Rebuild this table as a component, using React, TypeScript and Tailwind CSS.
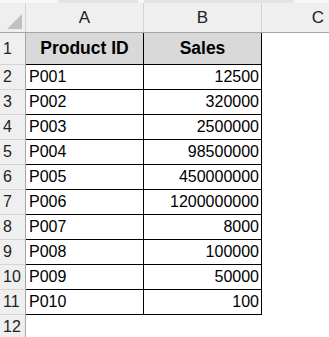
const rows: [string, string][] = [
  ["P001", "12500"],
  ["P002", "320000"],
  ["P003", "2500000"],
  ["P004", "98500000"],
  ["P005", "450000000"],
  ["P006", "1200000000"],
  ["P007", "8000"],
  ["P008", "100000"],
  ["P009", "50000"],
  ["P010", "100"],
];

const font = { fontFamily: '"Liberation Sans", Arial, sans-serif' };

function RowHead({ n, h }: { n: number; h: string }) {
  return (
    <div
      className={`${h} w-[26px] shrink-0 bg-[#efefef] border-r border-b border-r-[#a6a6a6] border-b-[#d4d4d4] flex items-center pl-[3px] text-[16px] text-[#222]`}
    >
      {n}
    </div>
  );
}

export default function App() {
  return (
    <div className="w-[329px] h-[337px] overflow-hidden bg-white" style={font}>
      <div className="h-[3px] bg-[#f7f7f7] flex">
        <div className="w-[58px]" />
        <div className="w-[80px] bg-[#e4e4e4]" />
        <div className="w-[6px]" />
        <div className="w-[150px] bg-[#e4e4e4]" />
      </div>

      {/* column headers */}
      <div className="flex h-[30px] bg-[#efefef] border-b border-[#a6a6a6]">
        <div className="w-[26px] shrink-0 relative border-r border-[#d4d4d4]">
          <div className="absolute right-[3px] bottom-[3px] w-0 h-0 border-l-[15px] border-l-transparent border-b-[15px] border-b-[#c0c0c0]" />
        </div>
        <div className="w-[118px] shrink-0 border-r border-[#d4d4d4] flex items-center justify-center text-[17px] text-[#222]">
          A
        </div>
        <div className="w-[118px] shrink-0 border-r border-[#d4d4d4] flex items-center justify-center text-[17px] text-[#222]">
          B
        </div>
        <div className="w-[112px] shrink-0 flex items-center justify-center text-[17px] text-[#222]">
          C
        </div>
      </div>

      {/* header row */}
      <div className="flex h-[32px]">
        <RowHead n={1} h="h-[32px]" />
        <div className="w-[118px] shrink-0 bg-[#d9d9d9] border-r border-b border-black flex items-center justify-center font-bold text-[17.5px] text-black">
          Product ID
        </div>
        <div className="w-[118px] shrink-0 bg-[#d9d9d9] border-r border-b border-black flex items-center justify-center font-bold text-[17.5px] text-black">
          Sales
        </div>
        <div className="flex-1" />
      </div>

      {rows.map(([id, sales], i) => (
        <div key={id} className="flex h-[25px]">
          <RowHead n={i + 2} h="h-[25px]" />
          <div className="w-[118px] shrink-0 border-r border-b border-black flex items-center pl-[3px] text-[16px] text-black">
            {id}
          </div>
          <div className="w-[118px] shrink-0 border-r border-b border-black flex items-center justify-end pr-[2px] text-[16px] text-black">
            {sales}
          </div>
          <div className="flex-1" />
        </div>
      ))}

      <div className="flex h-[25px]">
        <RowHead n={12} h="h-[25px]" />
        <div className="flex-1" />
      </div>
    </div>
  );
}
